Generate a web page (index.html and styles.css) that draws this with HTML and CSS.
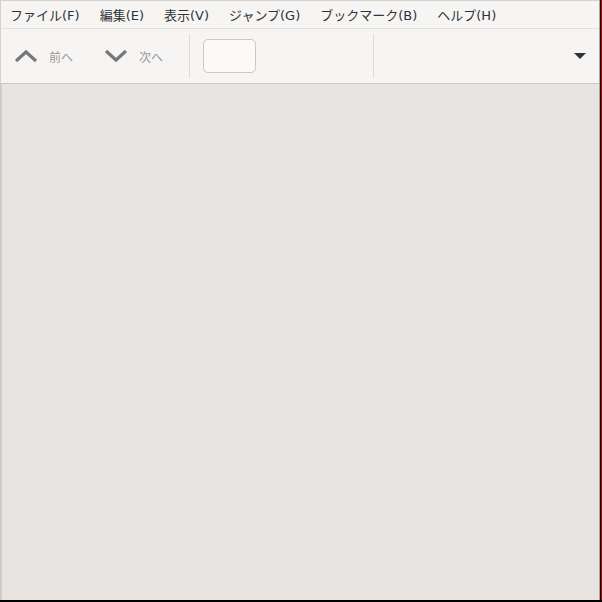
FILE: index.html
```html
<!DOCTYPE html>
<html lang="ja">
<head>
    <meta charset="UTF-8">
    <title>ドキュメントビューアー</title>
    <link rel="stylesheet" href="styles.css">
</head>
<body>
    <div class="frame">
        <div class="window">
            <!-- menu bar -->
            <div class="menubar">
                <span class="menu-item">ファイル(F)</span>
                <span class="menu-item">編集(E)</span>
                <span class="menu-item">表示(V)</span>
                <span class="menu-item">ジャンプ(G)</span>
                <span class="menu-item">ブックマーク(B)</span>
                <span class="menu-item">ヘルプ(H)</span>
            </div>

            <!-- tool bar -->
            <div class="toolbar">
                <div class="nav-button">
                    <svg width="24" height="14" viewBox="0 0 24 14">
                        <polyline points="2,12 12,3 22,12" fill="none" stroke="#787878" stroke-width="3.2"/>
                    </svg>
                    <span class="nav-label">前へ</span>
                </div>
                <div class="nav-button next">
                    <svg width="24" height="14" viewBox="0 0 24 14">
                        <polyline points="2,2 12,11 22,2" fill="none" stroke="#787878" stroke-width="3.2"/>
                    </svg>
                    <span class="nav-label">次へ</span>
                </div>
                <div class="separator"></div>
                <div class="page-entry"></div>
                <div class="separator wide"></div>
                <div class="spacer"></div>
                <div class="menu-arrow"></div>
            </div>

            <!-- document area -->
            <div class="view"></div>
        </div>
    </div>
</body>
</html>
```

FILE: styles.css
```css
/* Reset */
body {
    margin: 0;
    padding: 0;
    background-color: #000;
    font-family: "DejaVu Sans", "Noto Sans CJK JP", sans-serif;
}

.frame {
    width: 602px;
    height: 602px;
    display: flex;
    flex-direction: column;
}

.window {
    width: 599px;
    height: 600px;
    border-right: 1px solid #a8a6a3;
    box-shadow: 1px 0 0 #000, 2px 0 0 #c00000;
    display: flex;
    flex-direction: column;
    background-color: #f6f5f4;
}

/* Menu bar */
.menubar {
    height: 27px;
    border-top: 1px solid #d6d2ce;
    border-left: 1px solid #d6d2ce;
    border-bottom: 1px solid #e3dfdb;
    display: flex;
    align-items: center;
    padding-left: 9px;
    gap: 20px;
    font-size: 13px;
    color: #2e3436;
}

.menu-item {
    white-space: nowrap;
}

/* Tool bar */
.toolbar {
    height: 54px;
    border-left: 1px solid #d6d2ce;
    border-bottom: 1px solid #cdc7c2;
    display: flex;
    align-items: center;
}

.nav-button {
    display: flex;
    align-items: center;
    margin-left: 13px;
    width: 77px;
}

.nav-button.next {
    margin-left: 13px;
    width: 85px;
}

.nav-label {
    margin-left: 11px;
    font-family: "Noto Sans CJK JP", sans-serif;
    font-size: 12px;
    color: #9a9a98;
}

.separator {
    width: 1px;
    height: 44px;
    background-color: #e0dcd8;
}

.page-entry {
    width: 51px;
    height: 32px;
    margin: 0 0 0 13px;
    border: 1px solid #cdc7c2;
    border-radius: 5px;
    background-color: #fbfaf9;
}

.separator.wide {
    margin-left: 117px;
}

.spacer {
    flex: 1;
}

.menu-arrow {
    width: 0;
    height: 0;
    border-left: 6px solid transparent;
    border-right: 6px solid transparent;
    border-top: 6px solid #2e3436;
    margin-right: 13px;
}

/* Document area */
.view {
    flex: 1;
    background-color: #e8e4e1;
    border-left: 2px solid #cfccc8;
}
```
